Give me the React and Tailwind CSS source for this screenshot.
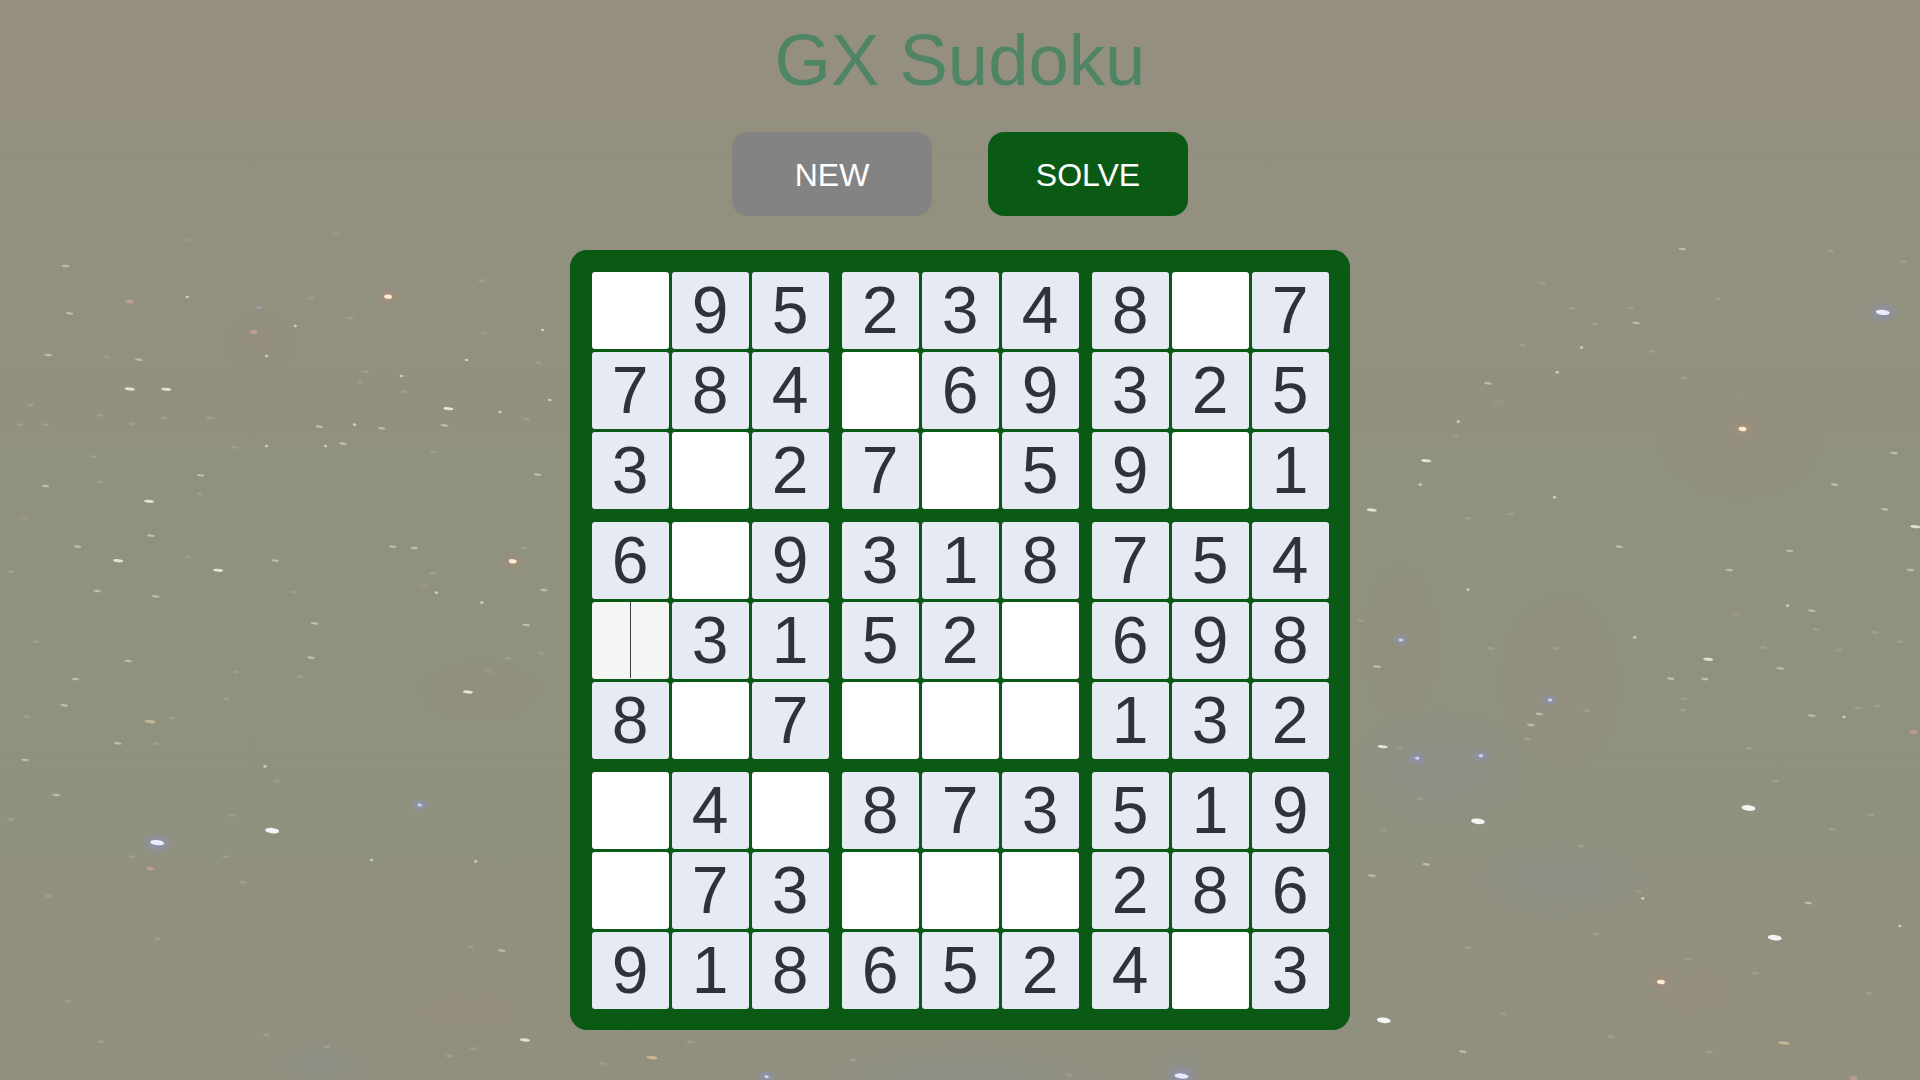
import React from "react";

const BOARD = [
  "_95234 8_7".replace(" ", ""),
  "784_69325",
  "3_27_59_1",
  "6_9318754",
  "|31 52_698".replace(" ", ""),
  "8_7___132",
  "_4_873519",
  "_73___286",
  "918652 4_3".replace(" ", ""),
];

// star groups: origin x, origin y, x scale, y scale of the measured crop, then [x, y, kind]
const CROPS = [
  [0, 200, 2.75, 3, [[180,198,"n"],[357,305,"p"],[515,120,"q"],[925,100,"q"],[192,340,"n"],[515,291,"s"],[713,323,"u"],[698,396,"p"],[857,294,"f"],[1067,290,"w"],[1325,242,"f"],[812,378,"s"],[963,354,"f"],[132,465,"n"],[295,471,"f"],[382,479,"n"],[733,468,"s"],[1492,390,"s"],[1330,400,"f"],[1283,480,"s"],[1482,488,"f"],[1104,528,"s"],[990,547,"f"],[1006,515,"f"],[357,567,"b"],[457,568,"b"],[1110,575,"f"],[1233,626,"b"],[1512,600,"s"],[85,615,"f"],[1375,636,"s"],[1448,658,"f"],[277,646,"f"],[450,654,"f"],[577,654,"f"],[55,674,"f"],[125,674,"f"],[362,672,"f"],[878,680,"n"],[975,674,"s"],[1050,685,"n"],[1222,676,"n"],[733,738,"s"],[895,738,"s"],[943,731,"n"],[647,742,"f"],[1192,755,"f"],[258,770,"f"]]],
  [0, 460, 2.75, 3, [[125,78,"n"],[275,66,"f"],[552,46,"n"],[550,102,"f"],[1478,44,"n"],[410,124,"b"],[415,227,"n"],[213,260,"n"],[325,302,"b"],[517,291,"f"],[600,331,"b"],[757,302,"n"],[1080,260,"n"],[1139,264,"n"],[1410,304,"w"],[1495,390,"n"],[1200,398,"s"],[1168,380,"q"],[30,335,"f"],[267,393,"n"],[428,409,"n"],[806,396,"f"],[865,490,"n"],[1447,495,"n"],[1325,428,"s"],[352,603,"n"],[855,593,"n"],[650,636,"f"],[207,657,"n"],[622,716,"f"],[1287,696,"b"],[65,172,"q"],[1442,264,"f"],[1190,340,"f"],[1345,633,"q"],[1488,580,"f"],[100,545,"f"],[825,650,"f"],[1398,595,"f"]]],
  [0, 700, 2.8, 3, [[180,16,"n"],[420,65,"y"],[482,54,"f"],[75,50,"f"],[330,130,"n"],[437,131,"f"],[70,180,"n"],[157,285,"n"],[30,358,"f"],[742,199,"s"],[775,244,"f"],[650,345,"f"],[762,392,"B"],[440,428,"U"],[1175,315,"V"],[370,470,"f"],[420,506,"p"],[1040,480,"s"],[1332,484,"s"],[632,470,"f"],[680,547,"f"],[135,588,"f"],[440,716,"f"],[1317,740,"f"],[1405,752,"n"],[1470,1020,"b"],[1258,1068,"f"],[1325,1046,"f"],[915,1040,"f"],[283,1025,"f"],[190,903,"f"],[745,1005,"f"]]],
  [1340, 220, 2.703, 3, [[925,87,"n"],[1327,93,"f"],[1523,125,"f"],[785,264,"f"],[1022,237,"f"],[1467,277,"U"],[800,309,"n"],[653,383,"s"],[843,394,"f"],[587,457,"s"],[400,490,"n"],[930,473,"f"],[430,547,"q"],[320,605,"s"],[312,647,"f"],[233,722,"b"],[1088,627,"w"],[1497,699,"n"],[1337,794,"n"],[217,794,"s"],[86,870,"b"],[580,832,"s"],[1473,868,"n"],[1555,920,"b"],[1215,993,"n"],[755,980,"n"],[1052,1050,"n"],[1542,1050,"n"],[346,1109,"s"],[1210,1157,"s"],[1275,1172,"n"],[1068,1182,"q"],[547,190,"f"],[627,265,"f"],[690,312,"f"],[493,376,"f"],[345,895,"f"],[463,882,"f"]]],
  [1350, 600, 2.75, 3, [[29,62,"f"],[140,120,"V"],[75,200,"n"],[567,145,"f"],[388,145,"f"],[783,112,"s"],[985,178,"b"],[1183,205,"n"],[882,236,"n"],[975,237,"n"],[1137,143,"f"],[1345,150,"f"],[1512,125,"f"],[1444,97,"f"],[1282,88,"f"],[550,300,"V"],[520,342,"n"],[650,332,"f"],[497,375,"n"],[918,296,"f"],[915,330,"f"],[487,417,"f"],[90,440,"b"],[137,445,"f"],[185,475,"V"],[360,467,"V"],[1270,347,"n"],[1358,351,"s"],[1452,318,"f"],[1397,325,"f"],[1550,396,"p"],[1097,445,"f"],[1170,543,"f"],[1096,624,"B"],[352,664,"B"],[1433,644,"f"],[1327,688,"f"],[193,597,"f"],[93,691,"f"],[635,738,"f"]]],
  [1350, 860, 2.75, 3, [[60,47,"n"],[210,13,"n"],[805,115,"s"],[793,95,"f"],[1260,129,"n"],[1168,233,"B"],[1512,198,"s"],[855,366,"w"],[930,298,"f"],[1115,340,"f"],[93,481,"B"],[310,575,"n"],[990,577,"f"],[1193,549,"y"],[1385,654,"p"],[1428,400,"f"],[423,462,"f"],[717,530,"f"],[325,263,"f"],[677,222,"f"]]],
  [560, 1020, 1.96, 3, [[180,113,"y"],[255,66,"f"],[85,130,"f"],[575,120,"f"],[998,165,"f"],[1218,168,"U"],[405,170,"V"]]],
];

const KINDS = {
  B: { rx: 7, ry: 2.8, fill: "#ffffff", o: 0.9 },
  b: { rx: 5, ry: 1.5, fill: "#f6f6ea", o: 0.8 },
  n: { rx: 3.8, ry: 1.2, fill: "#dcdccc", o: 0.6 },
  s: { rx: 1.8, ry: 1.3, fill: "#ecece0", o: 0.65 },
  f: { rx: 3.5, ry: 1.4, fill: "#b4b4a2", o: 0.4 },
  p: { rx: 4, ry: 2, fill: "#d0a698", o: 0.65 },
  q: { rx: 5.5, ry: 2.6, fill: "#a69788", o: 0.5 },
  y: { rx: 5.5, ry: 1.6, fill: "#dcc5a0", o: 0.7 },
  w: { rx: 4, ry: 2.2, fill: "#fff1d8", o: 0.95, halo: "url(#haloRed)", hr: 15 },
  U: { rx: 7, ry: 2.6, fill: "#eef1ff", o: 0.95, halo: "url(#haloBlue)", hr: 17 },
  V: { rx: 2.2, ry: 1.5, fill: "#dfe3fa", o: 0.8, halo: "url(#haloBlue)", hr: 11 },
  u: { rx: 3.5, ry: 1.4, fill: "#a3a7b2", o: 0.7 },
};

const STARS = CROPS.flatMap(([ox, oy, sx, sy, list]) =>
  list.map(([x, y, k]) => ({ x: ox + x / sx, y: oy + y / sy, k: KINDS[k] }))
);

const HAZE = [
  [1440, 770, 90, 60, "url(#hazeBlue)"],
  [1560, 880, 90, 40, "url(#hazeBlue)"],
  [1690, 990, 160, 80, "url(#hazeRed)"],
  [1560, 680, 60, 90, "url(#hazeRed)"],
  [1400, 640, 40, 80, "url(#hazeRed)"],
  [1740, 440, 80, 60, "url(#hazeRed)"],
  [470, 1010, 170, 70, "url(#hazeRed)"],
  [480, 690, 60, 30, "url(#hazeRed)"],
  [260, 340, 40, 30, "url(#hazeRed)"],
  [320, 1065, 50, 25, "url(#hazeBlue)"],
  [960, 1080, 150, 40, "url(#hazeBlue)"],
  [1180, 1070, 25, 25, "url(#hazeBlue)"],
];

function Sky() {
  return (
    <svg className="absolute inset-0 h-full w-full blur-[0.7px]" viewBox="0 0 1920 1080" aria-hidden="true">
      <defs>
        <radialGradient id="hazeRed">
          <stop offset="0%" stopColor="#a08878" stopOpacity="0.22" />
          <stop offset="100%" stopColor="#a08878" stopOpacity="0" />
        </radialGradient>
        <radialGradient id="hazeBlue">
          <stop offset="0%" stopColor="#868ea0" stopOpacity="0.28" />
          <stop offset="100%" stopColor="#868ea0" stopOpacity="0" />
        </radialGradient>
        <radialGradient id="haloRed">
          <stop offset="0%" stopColor="#d6855f" stopOpacity="0.55" />
          <stop offset="50%" stopColor="#b58f7c" stopOpacity="0.18" />
          <stop offset="100%" stopColor="#b58f7c" stopOpacity="0" />
        </radialGradient>
        <radialGradient id="haloBlue">
          <stop offset="0%" stopColor="#8b93e0" stopOpacity="0.6" />
          <stop offset="100%" stopColor="#8b93c0" stopOpacity="0" />
        </radialGradient>
      </defs>
      {HAZE.map(([cx, cy, rx, ry, fill], i) => (
        <ellipse key={i} cx={cx} cy={cy} rx={rx} ry={ry} fill={fill} />
      ))}
      {STARS.map((s, i) =>
        s.k.halo ? (
          <ellipse key={"h" + i} cx={s.x} cy={s.y} rx={s.k.hr} ry={s.k.hr * 0.7} fill={s.k.halo} />
        ) : null
      )}
      {STARS.map((s, i) => (
        <ellipse
          key={i}
          cx={s.x}
          cy={s.y}
          rx={s.k.rx}
          ry={s.k.ry}
          fill={s.k.fill}
          opacity={s.k.o}
          transform={`rotate(6 ${s.x} ${s.y})`}
        />
      ))}
    </svg>
  );
}

function Cell({ v }) {
  if (v === "|") {
    return (
      <div className="flex h-[77px] items-center justify-center rounded-[3px] bg-[#f5f5f3]">
        <div className="h-[76px] w-px bg-[#3a3b40]" />
      </div>
    );
  }
  if (v === "_") {
    return <div className="h-[77px] rounded-[3px] bg-white" />;
  }
  return (
    <div className="flex h-[77px] items-center justify-center rounded-[3px] bg-[#e5eaf3] text-[66px] leading-none text-[#303238]">
      {v}
    </div>
  );
}

function Block({ r, c }) {
  const cells = [];
  for (let y = r; y < r + 3; y++) {
    for (let x = c; x < c + 3; x++) {
      cells.push(<Cell key={`${y}-${x}`} v={BOARD[y][x]} />);
    }
  }
  return <div className="grid grid-cols-3 gap-[3px]">{cells}</div>;
}

export default function App() {
  const starts = [0, 3, 6];
  return (
    <div className="relative flex h-screen w-full flex-col items-center overflow-hidden bg-gradient-to-b from-[#958f80] via-[#90917f] to-[#91907f] font-['Liberation_Sans',Arial,sans-serif]">
      <Sky />
      <h1 className="relative pt-[18px] text-center text-[72.5px] font-normal leading-[84px] text-[#4f8562]">
        GX Sudoku
      </h1>
      <div className="relative mt-[30px] flex gap-[56px]">
        <button className="h-[84px] w-[200px] rounded-[16px] bg-[#848384] pt-[1px] text-[32px] text-white">NEW</button>
        <button className="h-[84px] w-[200px] rounded-[16px] bg-[#0a5a16] pt-[1px] text-[32px] text-white">SOLVE</button>
      </div>
      <div className="relative mt-[34px] grid h-[780px] w-[780px] grid-cols-3 content-start gap-[13px] rounded-[17px] bg-[#0a5a16] p-[21.5px]">
        {starts.map((r) => starts.map((c) => <Block key={`${r}${c}`} r={r} c={c} />))}
      </div>
    </div>
  );
}
